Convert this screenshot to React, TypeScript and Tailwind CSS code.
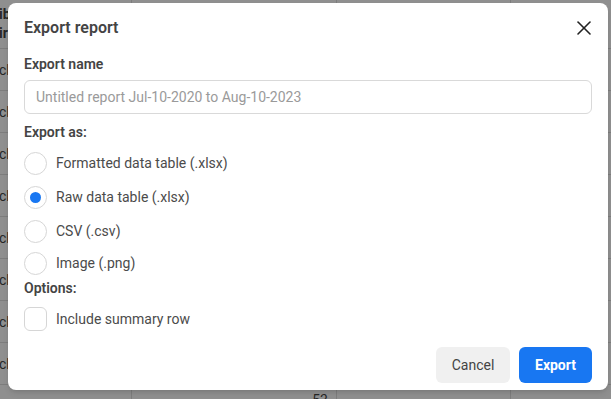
import { X } from "lucide-react";

const rows = Array.from({ length: 9 });

function Radio({ label, checked }: { label: string; checked?: boolean }) {
  return (
    <div className="flex items-center gap-[9px] h-[30px]">
      <span className="w-[23px] h-[23px] rounded-full border border-[#d6d6d6] flex items-center justify-center">
        {checked && <span className="w-[11px] h-[11px] rounded-full bg-[#1877f2]" />}
      </span>
      <span className="text-sm text-[#4b4b4b]">{label}</span>
    </div>
  );
}

export default function App() {
  return (
    <div className="relative w-[611px] h-[399px] overflow-hidden bg-[#8f8f8f] font-['Roboto',sans-serif]">
      {/* dimmed table behind the dialog */}
      <div className="grid grid-cols-[132px_205px_174px_100px] text-[#262626] text-sm">
        <div className="h-[49px] border-b border-r border-[#7d7d7d] flex flex-col justify-center font-bold leading-[19px] -ml-[1px]">
          <span>ib</span>
          <span>ir</span>
        </div>
        <div className="h-[49px] border-b border-r border-[#7d7d7d]" />
        <div className="h-[49px] border-b border-r border-[#7d7d7d]" />
        <div className="h-[49px] border-b border-[#7d7d7d]" />
        {rows.map((_, i) => (
          <div key={i} className="contents">
            <div className="h-[42px] border-b border-r border-[#7d7d7d] flex items-center -ml-[1px]">cl</div>
            <div className="h-[42px] border-b border-r border-[#7d7d7d] flex items-start justify-end pr-[8px] pt-[5px]">
              {i === 8 ? "53" : ""}
            </div>
            <div className="h-[42px] border-b border-r border-[#7d7d7d]" />
            <div className="h-[42px] border-b border-[#7d7d7d]" />
          </div>
        ))}
      </div>

      {/* dialog */}
      <div className="absolute left-[8px] top-[3px] w-[600px] h-[387px] bg-white rounded-lg shadow-md px-4 flex flex-col">
        <div className="h-[50px] flex items-center justify-between">
          <h2 className="text-base font-semibold text-[#444]">Export report</h2>
          <button className="w-6 h-6 flex items-center justify-center mr-[-4px] text-[#222]">
            <X size={24} strokeWidth={1.6} />
          </button>
        </div>

        <div className="mt-[1px] text-sm font-semibold leading-5 text-[#444]">Export name</div>
        <input
          className="mt-[6px] h-[34px] w-full rounded-md border border-[#d9d9d9] px-[11px] text-sm placeholder:text-[#9a9a9a] outline-none"
          placeholder="Untitled report Jul-10-2020 to Aug-10-2023"
        />

        <div className="mt-[8px] text-sm font-semibold leading-5 text-[#444]">Export as:</div>
        <div className="mt-[6px] flex flex-col gap-[4px]">
          <Radio label="Formatted data table (.xlsx)" />
          <Radio label="Raw data table (.xlsx)" checked />
          <Radio label="CSV (.csv)" />
        </div>
        <div className="mt-[2px]">
          <Radio label="Image (.png)" />
        </div>

        <div className="text-sm font-semibold leading-5 text-[#444]">Options:</div>
        <div className="mt-[9px] flex items-center gap-[9px]">
          <span className="w-[23px] h-[24px] rounded-md border border-[#d6d6d6]" />
          <span className="text-sm text-[#4b4b4b]">Include summary row</span>
        </div>

        <div className="mt-[16px] flex justify-end gap-[9px]">
          <button className="h-[36px] w-[74px] rounded-md bg-[#f0f0f0] text-sm text-[#444]">Cancel</button>
          <button className="h-[36px] w-[73px] rounded-md bg-[#1877f2] text-sm font-bold text-white">Export</button>
        </div>
      </div>
    </div>
  );
}
